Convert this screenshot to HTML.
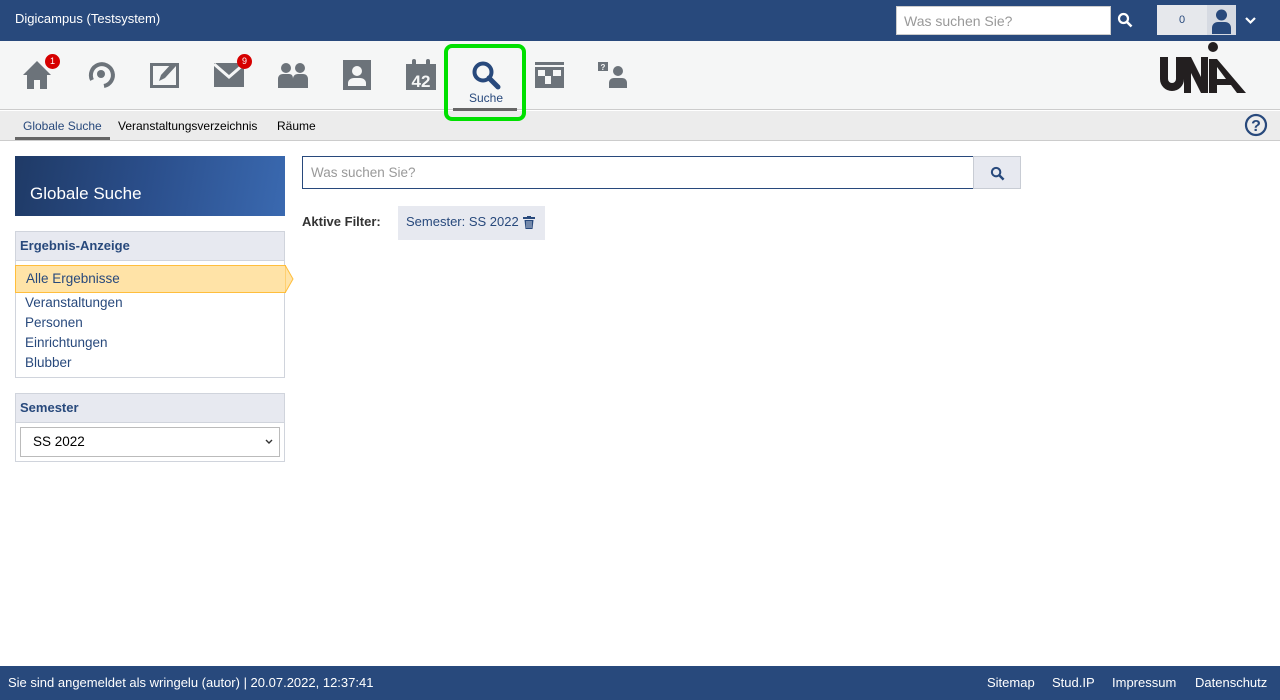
<!DOCTYPE html>
<html><head><meta charset="utf-8"><style>
*{box-sizing:border-box;margin:0;padding:0}
body{width:1280px;height:700px;position:relative;font-family:"Liberation Sans",sans-serif;font-size:13px;background:#fff;overflow:hidden;color:#000}
.top{position:absolute;left:0;top:0;width:1280px;height:41px;background:#28497c;color:#fff}
.top .t{position:absolute;left:15px;top:11px;font-size:13px}
.tsearch{position:absolute;left:896px;top:6px;width:215px;height:29px;background:#fff;border:1px solid #ccc;color:#999;font-size:14px;padding:6px 7px}
.nav{position:absolute;left:0;top:41px;width:1280px;height:69px;background:#f5f6f6;border-bottom:1px solid #ccc}
.ic{position:absolute;top:18px}
.badge{position:absolute;width:15px;height:15px;border-radius:50%;background:#d60000;color:#fff;font-size:9px;text-align:center;line-height:15px}
.sub{position:absolute;left:0;top:111px;width:1280px;height:30px;background:#ececec;border-bottom:1px solid #ccc;font-size:12px}
.sub span{position:absolute;top:8px}
.foot{position:absolute;left:0;top:666px;width:1280px;height:34px;background:#28497c;color:#fff;font-size:13px}
.blue{color:#28497c}
</style></head><body>
<div class="top"><div class="t">Digicampus (Testsystem)</div>
<div class="tsearch">Was suchen Sie?</div>
<svg style="position:absolute;left:1117px;top:12px" width="16" height="16" viewBox="0 0 16 16"><circle cx="6.5" cy="6.5" r="4.5" fill="none" stroke="#fff" stroke-width="2.2"/><path d="M10 10l4.5 4.5" stroke="#fff" stroke-width="2.6"/></svg>
<div style="position:absolute;left:1157px;top:5px;width:50px;height:30px;background:#e6e8ec;color:#28497c;font-size:11px;text-align:center;line-height:30px">0</div>
<div style="position:absolute;left:1207px;top:5px;width:29px;height:30px;background:#d6dae2"><svg width="29" height="30" viewBox="0 0 29 30"><circle cx="14.5" cy="10" r="5.5" fill="#28497c"/><path d="M5 29v-6c0-4 3-6 6-6h7c3 0 6 2 6 6v6z" fill="#28497c"/></svg></div>
<svg style="position:absolute;left:1244px;top:16px" width="13" height="9" viewBox="0 0 13 9"><path d="M2 2l4.5 4.5L11 2" fill="none" stroke="#fff" stroke-width="2.2"/></svg>
</div>
<div class="nav">
<svg class="ic" style="left:23px;top:19px" width="28" height="30" viewBox="0 0 28 30"><path d="M14 1L0 15h4v14h7v-9h6v9h7V15h4z" fill="#6c737a"/></svg>
<div class="badge" style="left:45px;top:13px">1</div>
<svg class="ic" style="left:87px;top:19px" width="30" height="30" viewBox="0 0 30 30"><path d="M5 20A11 11 0 1 1 17 26" fill="none" stroke="#6c737a" stroke-width="4"/><circle cx="14" cy="14" r="4" fill="#6c737a"/></svg>
<svg class="ic" style="left:150px;top:19px" width="30" height="28" viewBox="0 0 30 28"><rect x="1.5" y="4.5" width="26" height="22" fill="none" stroke="#6c737a" stroke-width="3"/><path d="M9 21l2-6 11-12 4 3-11 12z" fill="#6c737a"/></svg>
<svg class="ic" style="left:214px;top:22px" width="30" height="24" viewBox="0 0 30 24"><path d="M0 0h30v24H0z" fill="#6c737a"/><path d="M0 1l15 13L30 1" fill="none" stroke="#f5f6f6" stroke-width="3"/></svg>
<div class="badge" style="left:237px;top:13px">9</div>
<svg class="ic" style="left:278px;top:21px" width="30" height="26" viewBox="0 0 30 26"><circle cx="8" cy="6" r="5" fill="#6c737a"/><circle cx="22" cy="6" r="5" fill="#6c737a"/><path d="M0 26v-9c0-3 2-5 5-5h6c3 0 4 2 4 5v9zM15 26v-9c0-3 2-5 5-5h5c3 0 5 2 5 5v9z" fill="#6c737a"/></svg>
<svg class="ic" style="left:343px;top:19px" width="28" height="30" viewBox="0 0 28 30"><rect width="28" height="30" fill="#6c737a"/><circle cx="14" cy="11" r="5" fill="#f5f6f6"/><path d="M5 26v-3c0-3 3-5 6-5h6c3 0 6 2 6 5v3z" fill="#f5f6f6"/></svg>
<svg class="ic" style="left:406px;top:18px" width="30" height="31" viewBox="0 0 30 31"><rect y="5" width="30" height="26" fill="#6c737a"/><rect x="6" y="0" width="4" height="9" rx="2" fill="#6c737a"/><rect x="20" y="0" width="4" height="9" rx="2" fill="#6c737a"/><text x="15" y="28" font-family="Liberation Sans" font-weight="bold" font-size="17" fill="#f5f6f6" text-anchor="middle">42</text></svg>
<svg class="ic" style="left:471px;top:19px" width="30" height="30" viewBox="0 0 30 30"><circle cx="12" cy="12" r="8.5" fill="none" stroke="#28497c" stroke-width="4"/><path d="M18 18l9 9" stroke="#28497c" stroke-width="5" stroke-linecap="round"/></svg>
<div class="blue" style="position:absolute;left:469px;top:50px;font-size:12px">Suche</div>
<div style="position:absolute;left:453px;top:67px;width:64px;height:3px;background:#666"></div>
<svg class="ic" style="left:535px;top:21px" width="29" height="26" viewBox="0 0 29 26"><rect width="29" height="3" fill="#6c737a"/><rect y="5" width="29" height="21" fill="#6c737a"/><rect x="3" y="8" width="7" height="6" fill="#f5f6f6"/><rect x="10" y="14" width="6" height="8" fill="#f5f6f6"/><rect x="18" y="8" width="8" height="6" fill="#f5f6f6"/></svg>
<svg class="ic" style="left:598px;top:21px" width="30" height="26" viewBox="0 0 30 26"><rect width="10" height="9" fill="#6c737a"/><text x="5" y="8" font-size="8" font-weight="bold" fill="#f5f6f6" text-anchor="middle" font-family="Liberation Sans">?</text><circle cx="20" cy="9" r="5" fill="#6c737a"/><path d="M11 26v-5c0-3 2-5 5-5h8c3 0 5 2 5 5v5z" fill="#6c737a"/></svg>
<svg style="position:absolute;left:1158px;top:0" width="90" height="54" viewBox="0 0 90 54"><circle cx="55" cy="6" r="5" fill="#231f20"/><path d="M6 16v22a8 8 0 0 0 16 0V16" fill="none" stroke="#231f20" stroke-width="8"/><path d="M26 52V16h7l10 20V16h7v36h-7L33 32v20z" fill="#231f20"/><path d="M51 52V18h8l29 34h-9l-6-8h-14v8z M59 38h9l-9-12z" fill="#231f20" fill-rule="evenodd"/></svg>
</div>
<div class="sub">
<span class="blue" style="left:23px">Globale Suche</span>
<div style="position:absolute;left:15px;top:26px;width:95px;height:3px;background:#666"></div>
<span style="left:118px">Veranstaltungsverzeichnis</span>
<span style="left:277px">Räume</span>
<svg style="position:absolute;left:1244px;top:2px" width="24" height="24" viewBox="0 0 24 24"><circle cx="12" cy="12" r="10" fill="none" stroke="#28497c" stroke-width="2.2"/><text x="12" y="18" text-anchor="middle" font-size="16" font-weight="bold" fill="#28497c" font-family="Liberation Sans">?</text></svg>
</div>
<div style="position:absolute;left:444px;top:44px;width:82px;height:77px;border:4px solid #00e000;border-radius:8px;z-index:5"></div>
<div style="position:absolute;left:15px;top:156px;width:270px;height:60px;background:linear-gradient(100deg,#1f3a66 0%,#2b4f8c 50%,#3a69b0 100%)"><div style="position:absolute;left:15px;top:28px;color:#fff;font-size:17px">Globale Suche</div></div>
<div style="position:absolute;left:15px;top:231px;width:270px;height:147px;border:1px solid #d0d4dc">
<div style="height:29px;background:#e7e9f0;border-bottom:1px solid #d0d4dc;padding:6px 4px;font-weight:bold;color:#28497c;font-size:13px">Ergebnis-Anzeige</div>
<div style="position:absolute;left:-1px;top:33px;width:271px;height:28px;background:#ffe3a7;border:1px solid #ffbe3c;border-right:none;padding:5px 10px;color:#28497c;font-size:13.5px">Alle Ergebnisse</div>
<svg style="position:absolute;left:269px;top:33px" width="9" height="28" viewBox="0 0 9 28"><path d="M0 0l8 14-8 14z" fill="#ffe3a7" stroke="#ffbe3c"/></svg>
<div class="blue" style="position:absolute;left:9px;top:61px;font-size:13.5px;line-height:20px">Veranstaltungen<br>Personen<br>Einrichtungen<br>Blubber</div>
</div>
<div style="position:absolute;left:15px;top:393px;width:270px;height:69px;border:1px solid #d0d4dc">
<div style="height:29px;background:#e7e9f0;border-bottom:1px solid #d0d4dc;padding:6px 4px;font-weight:bold;color:#28497c;font-size:13px">Semester</div>
<div style="position:absolute;left:4px;top:33px;width:260px;height:30px;border:1px solid #bbb;padding:6px 12px;font-size:13.5px">SS 2022</div>
<svg style="position:absolute;left:249px;top:45px" width="8" height="6" viewBox="0 0 8 6"><path d="M1 1l3 3 3-3" fill="none" stroke="#333" stroke-width="1.4"/></svg>
</div>
<div style="position:absolute;left:302px;top:156px;width:672px;height:33px;border:1px solid #28497c;padding:8px 8px;color:#999;font-size:13.5px">Was suchen Sie?</div>
<div style="position:absolute;left:973px;top:156px;width:48px;height:33px;background:#e7e9f0;border:1px solid #c8ccd4"><svg style="position:absolute;left:16px;top:9px" width="15" height="15" viewBox="0 0 16 16"><circle cx="6.5" cy="6.5" r="4.5" fill="none" stroke="#28497c" stroke-width="2.2"/><path d="M10 10l4.5 4.5" stroke="#28497c" stroke-width="2.6"/></svg></div>
<div style="position:absolute;left:302px;top:214px;font-weight:bold;color:#333;font-size:13px">Aktive Filter:</div>
<div class="blue" style="position:absolute;left:398px;top:206px;width:147px;height:34px;background:#e7e9f0;padding:8px 8px;font-size:13px">Semester: SS 2022<svg style="position:absolute;left:125px;top:10px" width="12" height="13" viewBox="0 0 12 13"><rect x="0" y="1" width="12" height="2" fill="#28497c"/><rect x="4" y="0" width="4" height="2" fill="#28497c"/><path d="M1.5 4h9l-1 9h-7z" fill="#28497c"/><path d="M4 5v7M6 5v7M8 5v7" stroke="#e7e9f0" stroke-width=".8"/></svg></div>
<div class="foot"><span style="position:absolute;left:8px;top:9px">Sie sind angemeldet als wringelu (autor) | 20.07.2022, 12:37:41</span>
<span style="position:absolute;left:987px;top:9px">Sitemap</span><span style="position:absolute;left:1052px;top:9px">Stud.IP</span><span style="position:absolute;left:1112px;top:9px">Impressum</span><span style="position:absolute;left:1195px;top:9px">Datenschutz</span></div>
</body></html>
